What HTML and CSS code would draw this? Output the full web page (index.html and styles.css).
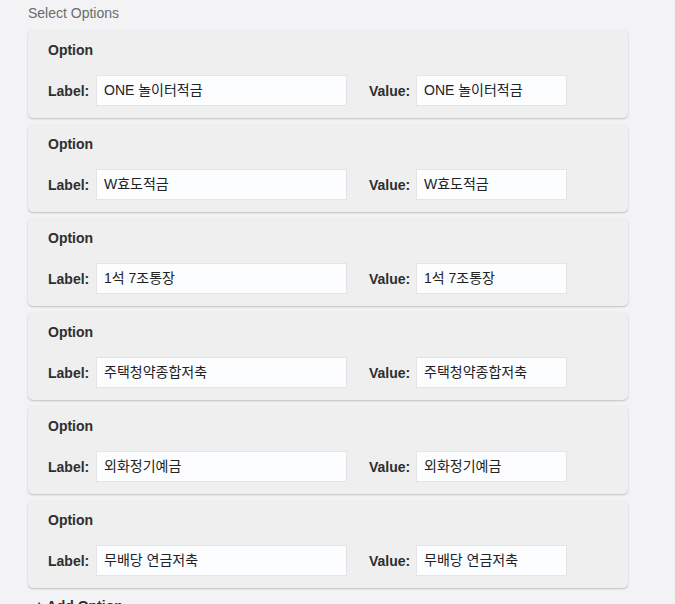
FILE: index.html
```html
<!DOCTYPE html>
<html lang="ko">
<head>
<meta charset="utf-8">
<link rel="stylesheet" href="styles.css">
</head>
<body>
<div class="page">
  <div class="title">Select Options</div>
  <div class="list">
    <div class="card">
      <div class="card-title">Option</div>
      <div class="row">
        <span class="lbl">Label:</span><div class="input wide">ONE 놀이터적금</div>
        <span class="lbl val">Value:</span><div class="input narrow">ONE 놀이터적금</div>
      </div>
    </div>
    <div class="card">
      <div class="card-title">Option</div>
      <div class="row">
        <span class="lbl">Label:</span><div class="input wide">W효도적금</div>
        <span class="lbl val">Value:</span><div class="input narrow">W효도적금</div>
      </div>
    </div>
    <div class="card">
      <div class="card-title">Option</div>
      <div class="row">
        <span class="lbl">Label:</span><div class="input wide">1석 7조통장</div>
        <span class="lbl val">Value:</span><div class="input narrow">1석 7조통장</div>
      </div>
    </div>
    <div class="card">
      <div class="card-title">Option</div>
      <div class="row">
        <span class="lbl">Label:</span><div class="input wide">주택청약종합저축</div>
        <span class="lbl val">Value:</span><div class="input narrow">주택청약종합저축</div>
      </div>
    </div>
    <div class="card">
      <div class="card-title">Option</div>
      <div class="row">
        <span class="lbl">Label:</span><div class="input wide">외화정기예금</div>
        <span class="lbl val">Value:</span><div class="input narrow">외화정기예금</div>
      </div>
    </div>
    <div class="card">
      <div class="card-title">Option</div>
      <div class="row">
        <span class="lbl">Label:</span><div class="input wide">무배당 연금저축</div>
        <span class="lbl val">Value:</span><div class="input narrow">무배당 연금저축</div>
      </div>
    </div>
  </div>
  <div class="add">+ Add Option</div>
</div>
</body>
</html>
```
FILE: styles.css
```css
html, body {
  margin: 0;
  padding: 0;
  background: #f3f3f5;
}
body {
  font-family: "Liberation Sans", Arial, "Noto Sans CJK KR", sans-serif;
  font-size: 14px;
  color: #333;
  overflow: hidden;
  height: 604px;
}
.page {
  padding: 4px 47px 0 28px;
}
.title {
  color: #6b6b6b;
  font-size: 14px;
  line-height: 18px;
  margin-bottom: 8px;
}
.list {
  display: flex;
  flex-direction: column;
  gap: 6px;
}
.card {
  background: #efefef;
  border-radius: 5px;
  box-shadow: 0 1px 2px rgba(0, 0, 0, 0.22);
  padding: 10px 20px 12px 20px;
}
.card-title {
  font-weight: bold;
  line-height: 20px;
  color: #2e2e2e;
  margin-bottom: 15px;
}
.row {
  display: flex;
  align-items: center;
}
.lbl {
  font-weight: bold;
  color: #2e2e2e;
  width: 48px;
  flex: none;
}
.lbl.val {
  margin-left: 22px;
  width: 47px;
}
.input {
  box-sizing: border-box;
  height: 31px;
  line-height: 29px;
  background: #fcfdff;
  border: 1px solid #e4e4e6;
  padding: 0 7px;
  color: #222;
  font-family: "Liberation Sans", Arial, "Noto Sans CJK KR", sans-serif;
  flex: none;
}
.wide { width: 251px; }
.narrow { width: 151px; }
.add {
  font-weight: bold;
  color: #2e2e2e;
  margin-top: 9px;
  padding-left: 7px;
  line-height: 18px;
}
```
